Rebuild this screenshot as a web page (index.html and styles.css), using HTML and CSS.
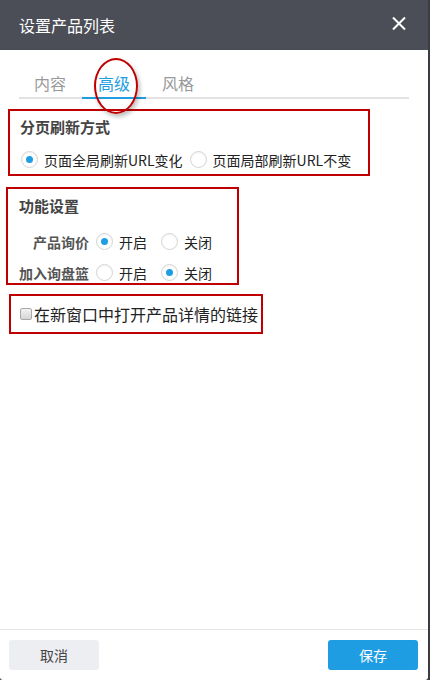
FILE: index.html
```html
<!DOCTYPE html>
<html lang="zh-CN">
<head>
  <meta charset="UTF-8" />
  <meta name="viewport" content="width=device-width, initial-scale=1.0" />
  <title>设置产品列表</title>
  <link rel="stylesheet" href="styles.css">
</head>
<body>
  <div class="dialog">
    <div class="dialog-head">
      <h1>设置产品列表</h1>
      <span class="close"></span>
    </div>

    <div class="dialog-body">
      <div class="tabs">
        <span class="tab">内容</span>
        <span class="tab active">高级</span>
        <span class="tab">风格</span>
        <span class="mark"></span>
      </div>

      <div class="box box-refresh">
        <h2>分页刷新方式</h2>
        <div class="radio-row">
          <label class="radio checked"><i></i>页面全局刷新URL变化</label>
          <label class="radio"><i></i>页面局部刷新URL不变</label>
        </div>
      </div>

      <div class="box box-func">
        <h2>功能设置</h2>
        <div class="func-row">
          <span class="func-label">产品询价</span>
          <label class="radio checked"><i></i>开启</label>
          <label class="radio"><i></i>关闭</label>
        </div>
        <div class="func-row">
          <span class="func-label">加入询盘篮</span>
          <label class="radio"><i></i>开启</label>
          <label class="radio checked"><i></i>关闭</label>
        </div>
      </div>

      <div class="box box-check">
        <label class="check"><i></i>在新窗口中打开产品详情的链接</label>
      </div>
    </div>

    <div class="dialog-foot">
      <button class="btn btn-cancel">取消</button>
      <button class="btn btn-save">保存</button>
    </div>
  </div>
</body>
</html>
```

FILE: styles.css
```css
body {
  margin: 0;
  background: #3a3c42;
  font-family: "Noto Sans CJK SC", "Liberation Sans", sans-serif;
  color: #333;
}

.dialog {
  width: 428px;
  height: 680px;
  background: #fff;
  display: flex;
  flex-direction: column;
  border-radius: 0 0 3px 3px;
}

.dialog-head {
  height: 50px;
  background: #4b4e56;
  display: flex;
  align-items: center;
  justify-content: space-between;
  padding: 0 21px 0 19px;
}

.dialog-head h1 {
  margin: 0;
  font-size: 16px;
  font-weight: normal;
  color: #fff;
  line-height: 1;
}

.close {
  width: 16px;
  height: 16px;
  position: relative;
  top: -1px;
}

.close::before, .close::after {
  content: "";
  position: absolute;
  left: 7px;
  top: -1px;
  width: 2px;
  height: 17px;
  background: #fff;
  transform: rotate(45deg);
}

.close::after {
  transform: rotate(-45deg);
}

.dialog-body {
  flex: 1;
}

.tabs {
  position: relative;
  display: flex;
  margin: 0 19px 0 19px;
  height: 49px;
  border-bottom: 2px solid #e2e2e2;
  box-sizing: border-box;
}

.tab {
  width: 64px;
  text-align: center;
  font-size: 16px;
  line-height: 1;
  padding-top: 25px;
  color: #999;
  box-sizing: border-box;
  margin-bottom: -2px;
}

.tab:first-child {
  margin-left: -1px;
}

.tab.active {
  color: #1f9de3;
  border-bottom: 2px solid #1f9de3;
}

.mark {
  position: absolute;
  left: 75px;
  top: 8px;
  width: 40px;
  height: 52px;
  border: 2px solid #c00000;
  border-radius: 50%;
  box-shadow: 2px 3px 4px rgba(0, 0, 0, 0.25);
}

.box {
  border: 2px solid #c00000;
  box-sizing: border-box;
}

.box h2 {
  margin: 0;
  font-size: 15px;
  font-weight: bold;
  color: #444;
  line-height: 1;
}

.box-refresh {
  margin: 10px 0 0 8px;
  width: 362px;
  height: 67px;
  padding: 8px 0 0 10px;
}

.radio-row {
  display: flex;
  margin-top: 17px;
}

.radio {
  display: flex;
  align-items: center;
  font-size: 14px;
  line-height: 1;
  color: #222;
}

.radio i {
  width: 15px;
  height: 15px;
  border: 1px solid #d4d4d4;
  border-radius: 50%;
  margin-right: 6px;
  position: relative;
  box-shadow: inset 0 1px 2px rgba(0, 0, 0, 0.06);
}

.radio.checked i::after {
  content: "";
  position: absolute;
  left: 4px;
  top: 4px;
  width: 7px;
  height: 7px;
  border-radius: 50%;
  background: #1f9de3;
}

.radio-row .radio:first-child {
  margin-left: 1px;
  margin-right: 7px;
}

.box-func {
  margin: 11px 0 0 6px;
  width: 233px;
  height: 98px;
  padding: 9px 0 0 11px;
}

.func-row {
  display: flex;
  align-items: center;
  height: 31px;
}

.func-row:first-of-type {
  margin-top: 13px;
}

.func-label {
  width: 70px;
  text-align: right;
  font-size: 14px;
  font-weight: bold;
  color: #555;
  margin-right: 7px;
}

.func-row .radio {
  width: 65px;
}

.box-check {
  margin: 9px 0 0 9px;
  width: 254px;
  height: 40px;
  padding: 0 0 0 9px;
  display: flex;
  align-items: center;
}

.check {
  display: flex;
  align-items: center;
  font-size: 16px;
  color: #222;
  line-height: 1;
}

.check i {
  width: 10px;
  height: 10px;
  border: 1px solid #a9a9a9;
  border-radius: 2px;
  background: linear-gradient(#f2f2f2, #d6d6d6);
  margin-right: 2px;
}

.dialog-foot {
  height: 51px;
  border-top: 1px solid #e4e4e4;
  box-sizing: border-box;
  display: flex;
  justify-content: space-between;
  align-items: flex-start;
  padding: 10px 10px 0 9px;
}

.btn {
  width: 90px;
  height: 30px;
  border: none;
  border-radius: 3px;
  font-family: "Noto Sans CJK SC", sans-serif;
  font-size: 14px;
  cursor: pointer;
}

.btn-cancel {
  background: #eceef2;
  color: #444;
}

.btn-save {
  background: #1f9de3;
  color: #fff;
}
```
